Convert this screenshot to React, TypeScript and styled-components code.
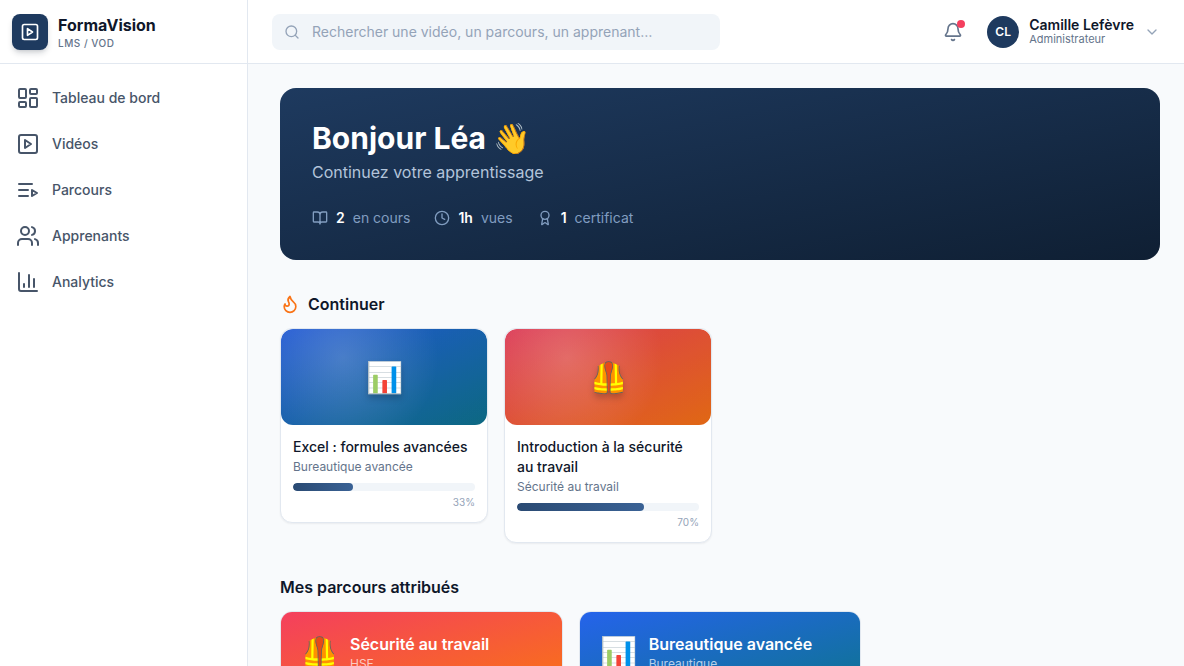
import React from "react";
import styled, { createGlobalStyle } from "styled-components";

const GlobalStyle = createGlobalStyle`
  *, *::before, *::after { box-sizing: border-box; }
  body {
    margin: 0;
    background: #f8fafc;
    color: #0f172a;
    font-family: Inter, "Liberation Sans", sans-serif;
    font-size: 14px;
    line-height: 20px;
  }
  h1, h2, h3, p, ul { margin: 0; padding: 0; }
  button, input { font: inherit; }
`;

const Svg = styled.svg<{ $size: number; $weight?: number }>`
  width: ${(p) => p.$size}px;
  height: ${(p) => p.$size}px;
  flex-shrink: 0;
  fill: none;
  stroke: currentColor;
  stroke-width: ${(p) => p.$weight ?? 2};
  stroke-linecap: round;
  stroke-linejoin: round;
`;

type IconName =
  | "dashboard" | "video" | "playlist" | "users" | "chart" | "search"
  | "bell" | "chevron" | "book" | "clock" | "award" | "flame";

const shapes: Record<IconName, React.ReactNode> = {
  dashboard: (
    <>
      <rect x="3" y="3" width="7" height="9" rx="1" />
      <rect x="14" y="3" width="7" height="5" rx="1" />
      <rect x="14" y="12" width="7" height="9" rx="1" />
      <rect x="3" y="16" width="7" height="5" rx="1" />
    </>
  ),
  video: (
    <>
      <rect x="3" y="3" width="18" height="18" rx="2" />
      <path d="m9 8 6 4-6 4Z" />
    </>
  ),
  playlist: <path d="M12 12H3M16 6H3M12 18H3m13-6 5 3-5 3v-6Z" />,
  users: (
    <>
      <path d="M16 21v-2a4 4 0 0 0-4-4H6a4 4 0 0 0-4 4v2" />
      <circle cx="9" cy="7" r="4" />
      <path d="M22 21v-2a4 4 0 0 0-3-3.87M16 3.13a4 4 0 0 1 0 7.75" />
    </>
  ),
  chart: <path d="M3 3v16a2 2 0 0 0 2 2h16M18 17V9M13 17V5M8 17v-3" />,
  search: (
    <>
      <circle cx="11" cy="11" r="8" />
      <path d="m21 21-4.3-4.3" />
    </>
  ),
  bell: (
    <path d="M10.268 21a2 2 0 0 0 3.464 0M3.262 15.326A1 1 0 0 0 4 17h16a1 1 0 0 0 .74-1.673C19.41 13.956 18 12.499 18 8A6 6 0 0 0 6 8c0 4.499-1.411 5.956-2.738 7.326" />
  ),
  chevron: <path d="m6 9 6 6 6-6" />,
  book: (
    <path d="M12 7v14M3 18a1 1 0 0 1-1-1V4a1 1 0 0 1 1-1h5a4 4 0 0 1 4 4 4 4 0 0 1 4-4h5a1 1 0 0 1 1 1v13a1 1 0 0 1-1 1h-6a3 3 0 0 0-3 3 3 3 0 0 0-3-3z" />
  ),
  clock: (
    <>
      <circle cx="12" cy="12" r="10" />
      <path d="M12 6v6l4 2" />
    </>
  ),
  award: (
    <>
      <path d="m15.477 12.89 1.515 8.526a.5.5 0 0 1-.81.47l-3.58-2.687a1 1 0 0 0-1.197 0l-3.586 2.686a.5.5 0 0 1-.81-.469l1.514-8.526" />
      <circle cx="12" cy="8" r="6" />
    </>
  ),
  flame: (
    <path d="M8.5 14.5A2.5 2.5 0 0 0 11 12c0-1.38-.5-2-1-3-1.072-2.143-.224-4.054 2-6 .5 2.5 2 4.9 4 6.5 2 1.6 3 3.5 3 5.5a7 7 0 1 1-14 0c0-1.153.433-2.294 1-3a2.5 2.5 0 0 0 2.5 2.5z" />
  ),
};

function Icon({ name, size, weight }: { name: IconName; size: number; weight?: number }) {
  return (
    <Svg viewBox="0 0 24 24" $size={size} $weight={weight} aria-hidden="true">
      {shapes[name]}
    </Svg>
  );
}

const Shell = styled.div`
  display: grid;
  grid-template-columns: 248px minmax(0, 1fr);
  height: 100vh;
  overflow: hidden;
`;

const Sidebar = styled.aside`
  background: #fff;
  border-right: 1px solid #e2e8f0;
`;

const Brand = styled.div`
  display: flex;
  align-items: center;
  gap: 10px;
  height: 64px;
  padding: 0 12px;
  border-bottom: 1px solid #e2e8f0;
`;

const BrandMark = styled.span`
  display: grid;
  place-items: center;
  width: 36px;
  height: 36px;
  border-radius: 8px;
  background: #1e3a5f;
  color: #fff;
  box-shadow: 0 4px 6px -1px rgba(15, 23, 42, 0.16), 0 2px 4px -2px rgba(15, 23, 42, 0.16);
`;

const BrandText = styled.div`
  padding-top: 2px;
`;

const BrandName = styled.div`
  font-size: 16px;
  font-weight: 700;
  line-height: 20px;
`;

const BrandTag = styled.div`
  color: #64748b;
  font-size: 10px;
  font-weight: 500;
  line-height: 16px;
  letter-spacing: 0.05em;
`;

const NavList = styled.ul`
  display: flex;
  flex-direction: column;
  gap: 2px;
  padding: 12px 8px;
  list-style: none;
`;

const NavLink = styled.a`
  display: flex;
  align-items: center;
  gap: 12px;
  height: 44px;
  padding: 0 8px;
  border-radius: 8px;
  color: #475569;
  font-weight: 500;
  text-decoration: none;
  &:hover { background: #f1f5f9; }
`;

const Column = styled.div`
  display: flex;
  flex-direction: column;
  min-height: 0;
`;

const Topbar = styled.header`
  display: flex;
  align-items: center;
  justify-content: space-between;
  flex-shrink: 0;
  height: 64px;
  padding: 0 24px;
  background: #fff;
  border-bottom: 1px solid #e2e8f0;
`;

const SearchBox = styled.label`
  display: flex;
  align-items: center;
  gap: 12px;
  flex: 0 1 448px;
  height: 36px;
  padding: 0 12px;
  border-radius: 8px;
  background: #f1f5f9;
  color: #94a3b8;
`;

const SearchInput = styled.input`
  flex: 1;
  min-width: 0;
  padding: 0;
  border: 0;
  outline: 0;
  background: transparent;
  color: #0f172a;
  &::placeholder { color: #94a3b8; opacity: 1; }
`;

const Actions = styled.div`
  display: flex;
  align-items: center;
  gap: 16px;
`;

const BellButton = styled.button`
  position: relative;
  display: grid;
  place-items: center;
  width: 36px;
  height: 36px;
  padding: 0;
  border: 0;
  border-radius: 8px;
  background: transparent;
  color: #64748b;
`;

const BellDot = styled.span`
  position: absolute;
  top: 6px;
  right: 6px;
  width: 8px;
  height: 8px;
  border-radius: 50%;
  background: #f43f5e;
`;

const UserButton = styled.button`
  display: flex;
  align-items: center;
  gap: 10px;
  padding: 0;
  border: 0;
  background: transparent;
  color: #94a3b8;
  text-align: left;
`;

const Avatar = styled.span`
  display: grid;
  place-items: center;
  width: 32px;
  height: 32px;
  border-radius: 50%;
  background: #1e3a5f;
  color: #fff;
  font-size: 12px;
  font-weight: 600;
`;

const UserText = styled.span`
  display: flex;
  flex-direction: column;
  padding-bottom: 2px;
`;

const UserName = styled.span`
  color: #0f172a;
  font-weight: 600;
  line-height: 16px;
`;

const UserRole = styled.span`
  color: #64748b;
  font-size: 11px;
  line-height: 12px;
`;

const Content = styled.main`
  flex: 1;
  min-height: 0;
  padding: 24px 24px 24px 32px;
  overflow-y: auto;
  scrollbar-width: none;
`;

const Hero = styled.section`
  padding: 32px;
  border-radius: 16px;
  background: linear-gradient(to bottom right, #1e3a5f, #0f1f33);
  color: #fff;
`;

const HeroTitle = styled.h1`
  font-size: 30px;
  font-weight: 700;
  line-height: 36px;
`;

const HeroText = styled.p`
  margin-top: 4px;
  color: #b3c4da;
  font-size: 16px;
  line-height: 24px;
`;

const HeroStats = styled.ul`
  display: flex;
  gap: 24px;
  margin-top: 24px;
  list-style: none;
`;

const HeroStat = styled.li`
  display: flex;
  align-items: center;
  gap: 8px;
  color: #819dc0;
  strong { color: #fff; font-weight: 600; }
`;

const Section = styled.section`
  margin-top: 32px;
`;

const SectionTitle = styled.h2`
  display: flex;
  align-items: center;
  gap: 8px;
  margin-bottom: 12px;
  font-size: 16px;
  font-weight: 600;
  line-height: 24px;
`;

const FlameColor = styled.span`
  display: flex;
  color: #f97316;
`;

const CourseRow = styled.div`
  display: flex;
  align-items: flex-start;
  gap: 16px;
`;

const CourseCard = styled.article`
  width: 208px;
  overflow: hidden;
  border: 1px solid #e2e8f0;
  border-radius: 12px;
  background: #fff;
  box-shadow: 0 1px 2px rgba(15, 23, 42, 0.06);
`;

const Cover = styled.div<{ $from: string; $to: string }>`
  display: grid;
  place-items: center;
  height: 96px;
  border-radius: 12px;
  background:
    radial-gradient(circle at 30% 30%, rgba(255, 255, 255, 0.2), transparent 60%),
    linear-gradient(rgba(0, 0, 0, 0.1), rgba(0, 0, 0, 0.1)),
    linear-gradient(to bottom right, ${(p) => p.$from}, ${(p) => p.$to});
`;

const Emoji = styled.span<{ $raised?: boolean }>`
  font-size: 30px;
  line-height: 36px;
  filter: ${(p) => (p.$raised ? "drop-shadow(0 4px 3px rgba(0, 0, 0, 0.2))" : "none")};
`;

const CourseBody = styled.div`
  padding: 12px;
`;

const CourseTitle = styled.h3`
  font-size: 14px;
  font-weight: 500;
  line-height: 20px;
`;

const CoursePath = styled.p`
  color: #64748b;
  font-size: 12px;
  line-height: 20px;
`;

const Track = styled.div`
  height: 8px;
  margin-top: 6px;
  overflow: hidden;
  border-radius: 4px;
  background: #f1f5f9;
`;

const Fill = styled.div`
  height: 100%;
  border-radius: 4px;
  background: linear-gradient(to right, #2a4a73, #3a6295);
`;

const Percent = styled.p`
  margin-top: 4px;
  color: #94a3b8;
  font-size: 10px;
  line-height: 15px;
  text-align: right;
`;

const PathGrid = styled.div`
  display: grid;
  grid-template-columns: repeat(3, minmax(0, 1fr));
  gap: 16px;
`;

const PathCard = styled.article`
  overflow: hidden;
  border: 1px solid #e2e8f0;
  border-radius: 12px;
  background: #fff;
`;

const PathHead = styled.div<{ $from: string; $to: string }>`
  display: flex;
  align-items: center;
  gap: 12px;
  padding: 20px;
  background: linear-gradient(to bottom right, ${(p) => p.$from}, ${(p) => p.$to});
  color: #fff;
`;

const PathTitle = styled.h3`
  font-size: 16px;
  font-weight: 600;
  line-height: 24px;
`;

const PathTag = styled.p`
  color: rgba(255, 255, 255, 0.7);
  font-size: 12px;
  line-height: 16px;
`;

const nav: { icon: IconName; label: string }[] = [
  { icon: "dashboard", label: "Tableau de bord" },
  { icon: "video", label: "Vidéos" },
  { icon: "playlist", label: "Parcours" },
  { icon: "users", label: "Apprenants" },
  { icon: "chart", label: "Analytics" },
];

const stats: { icon: IconName; value: string; label: string }[] = [
  { icon: "book", value: "2", label: "en cours" },
  { icon: "clock", value: "1h", label: "vues" },
  { icon: "award", value: "1", label: "certificat" },
];

const courses = [
  { title: "Excel : formules avancées", path: "Bureautique avancée", emoji: "📊", percent: 33, from: "#2563eb", to: "#0e7490" },
  { title: "Introduction à la sécurité au travail", path: "Sécurité au travail", emoji: "🦺", percent: 70, from: "#f43f5e", to: "#f97316" },
];

const paths = [
  { title: "Sécurité au travail", tag: "HSE", emoji: "🦺", from: "#f43f5e", to: "#f97316" },
  { title: "Bureautique avancée", tag: "Bureautique", emoji: "📊", from: "#2563eb", to: "#0e7490" },
];

export default function App() {
  return (
    <>
      <GlobalStyle />
      <Shell>
        <Sidebar>
          <Brand>
            <BrandMark><Icon name="video" size={20} /></BrandMark>
            <BrandText>
              <BrandName>FormaVision</BrandName>
              <BrandTag>LMS / VOD</BrandTag>
            </BrandText>
          </Brand>
          <nav aria-label="Navigation principale">
            <NavList>
              {nav.map((item) => (
                <li key={item.label}>
                  <NavLink href="#"><Icon name={item.icon} size={24} />{item.label}</NavLink>
                </li>
              ))}
            </NavList>
          </nav>
        </Sidebar>
        <Column>
          <Topbar>
            <SearchBox>
              <Icon name="search" size={16} />
              <SearchInput type="search" aria-label="Rechercher" placeholder="Rechercher une vidéo, un parcours, un apprenant…" />
            </SearchBox>
            <Actions>
              <BellButton type="button" aria-label="Notifications">
                <Icon name="bell" size={20} />
                <BellDot />
              </BellButton>
              <UserButton type="button">
                <Avatar>CL</Avatar>
                <UserText>
                  <UserName>Camille Lefèvre</UserName>
                  <UserRole>Administrateur</UserRole>
                </UserText>
                <Icon name="chevron" size={16} />
              </UserButton>
            </Actions>
          </Topbar>
          <Content>
            <Hero>
              <HeroTitle>Bonjour Léa 👋</HeroTitle>
              <HeroText>Continuez votre apprentissage</HeroText>
              <HeroStats>
                {stats.map((s) => (
                  <HeroStat key={s.label}>
                    <Icon name={s.icon} size={16} />
                    <strong>{s.value}</strong>
                    <span>{s.label}</span>
                  </HeroStat>
                ))}
              </HeroStats>
            </Hero>
            <Section>
              <SectionTitle>
                <FlameColor><Icon name="flame" size={20} /></FlameColor>
                Continuer
              </SectionTitle>
              <CourseRow>
                {courses.map((c) => (
                  <CourseCard key={c.title}>
                    <Cover $from={c.from} $to={c.to}><Emoji $raised>{c.emoji}</Emoji></Cover>
                    <CourseBody>
                      <CourseTitle>{c.title}</CourseTitle>
                      <CoursePath>{c.path}</CoursePath>
                      <Track role="progressbar" aria-label={c.title} aria-valuenow={c.percent} aria-valuemin={0} aria-valuemax={100}>
                        <Fill style={{ width: `${c.percent}%` }} />
                      </Track>
                      <Percent>{c.percent}%</Percent>
                    </CourseBody>
                  </CourseCard>
                ))}
              </CourseRow>
            </Section>
            <Section>
              <SectionTitle>Mes parcours attribués</SectionTitle>
              <PathGrid>
                {paths.map((p) => (
                  <PathCard key={p.title}>
                    <PathHead $from={p.from} $to={p.to}>
                      <Emoji>{p.emoji}</Emoji>
                      <div>
                        <PathTitle>{p.title}</PathTitle>
                        <PathTag>{p.tag}</PathTag>
                      </div>
                    </PathHead>
                  </PathCard>
                ))}
              </PathGrid>
            </Section>
          </Content>
        </Column>
      </Shell>
    </>
  );
}
